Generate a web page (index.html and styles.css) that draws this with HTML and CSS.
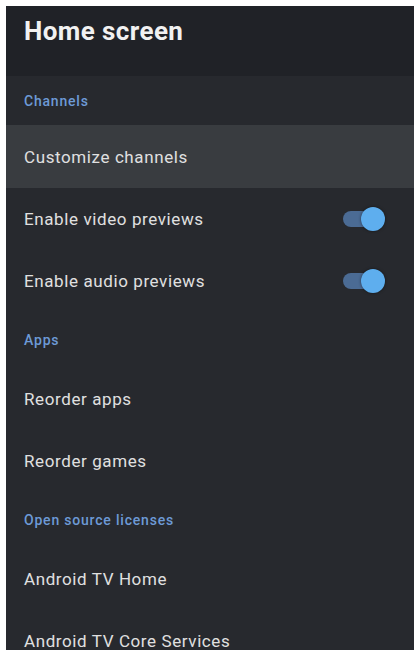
FILE: index.html
```html
<!DOCTYPE html>
<html lang="en">
<head>
    <meta charset="UTF-8">
    <meta name="viewport" content="width=device-width, initial-scale=1.0">
    <title>Home screen</title>
    <link rel="stylesheet" href="styles.css">
</head>
<body>
    <div class="panel">
        <header class="panel-header">
            <h1>Home screen</h1>
        </header>

        <div class="section section-first">Channels</div>
        <div class="item item-focused">Customize channels</div>
        <div class="item">
            <span>Enable video previews</span>
            <span class="switch on"><span class="thumb"></span></span>
        </div>
        <div class="item">
            <span>Enable audio previews</span>
            <span class="switch on"><span class="thumb"></span></span>
        </div>

        <div class="section">Apps</div>
        <div class="item">Reorder apps</div>
        <div class="item">Reorder games</div>

        <div class="section">Open source licenses</div>
        <div class="item">Android TV Home</div>
        <div class="item">Android TV Core Services</div>
    </div>
</body>
</html>
```

FILE: styles.css
```css
body {
    margin: 0;
    padding: 0;
    background-color: #ffffff;
    font-family: 'Roboto', 'Liberation Sans', sans-serif;
}
.panel {
    margin: 6px 4px 0 6px;
    height: 644px;
    overflow: hidden;
    background-color: #27292e;
    color: #e3e3e3;
}
.panel-header {
    height: 70px;
    box-sizing: border-box;
    padding: 10px 18px 0 18px;
    background-color: #202227;
}
.panel-header h1 {
    margin: 0;
    font-size: 26px;
    font-weight: 700;
    letter-spacing: 0.4px;
    color: #f1f1f1;
}
.section {
    height: 56px;
    display: flex;
    align-items: center;
    padding: 0 18px;
    font-size: 14px;
    font-weight: 500;
    letter-spacing: 0.8px;
    color: #6d9ad6;
}
.section-first {
    height: 49px;
}
.item {
    height: 62px;
    display: flex;
    align-items: center;
    justify-content: space-between;
    padding: 0 31px 0 18px;
    font-size: 17px;
    letter-spacing: 0.6px;
    color: #e0e0e0;
}
.item-focused {
    height: 63px;
    background-color: #393c40;
}
.switch {
    position: relative;
    width: 40px;
    height: 16px;
    border-radius: 8px;
    background-color: #4b6b94;
}
.switch .thumb {
    position: absolute;
    top: -4px;
    right: -2px;
    width: 24px;
    height: 24px;
    border-radius: 50%;
    background-color: #5eaeee;
    box-shadow: 0 0 3px rgba(0, 0, 0, 0.5);
}
```
